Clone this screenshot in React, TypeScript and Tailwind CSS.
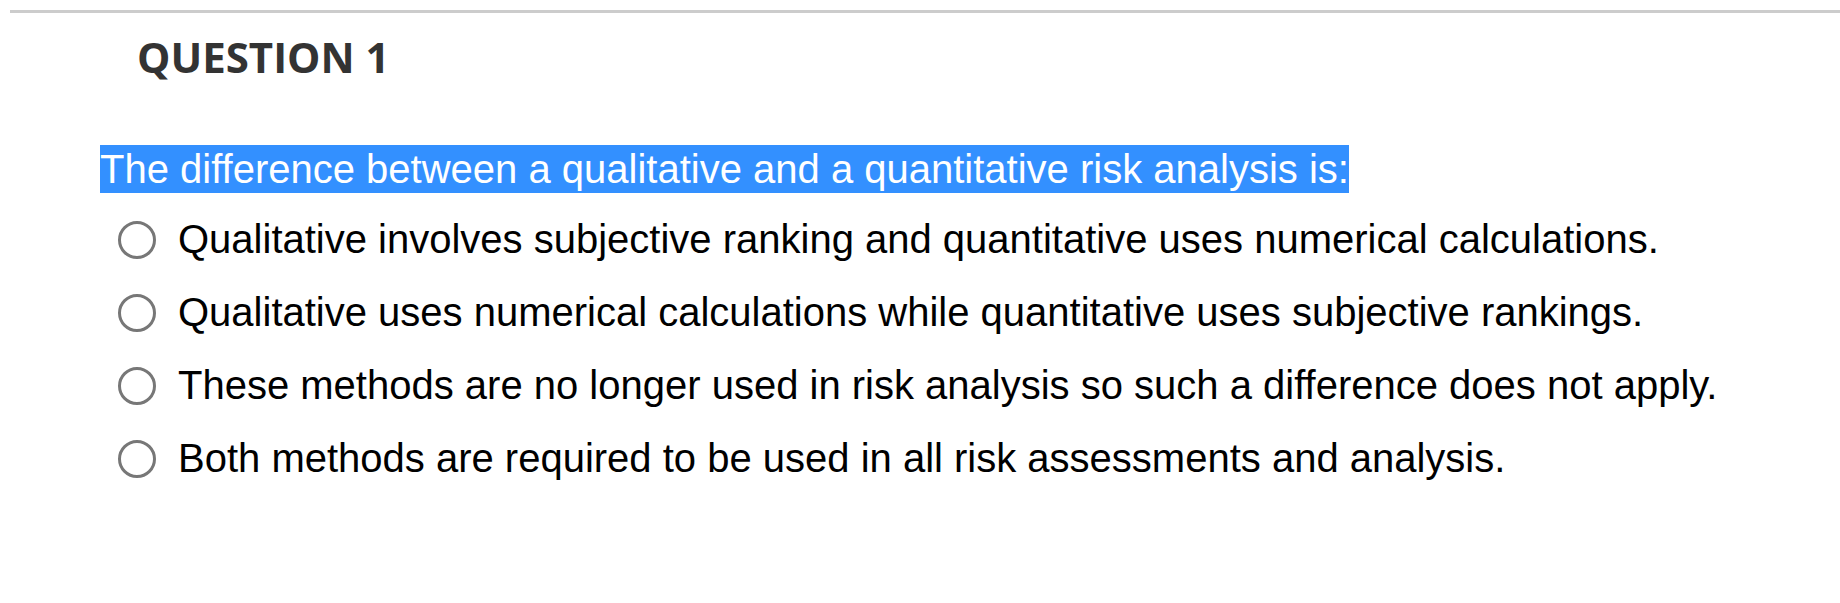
import React from "react";

const options = [
  "Qualitative involves subjective ranking and quantitative uses numerical calculations.",
  "Qualitative uses numerical calculations while quantitative uses subjective rankings.",
  "These methods are no longer used in risk analysis so such a difference does not apply.",
  "Both methods are required to be used in all risk assessments and analysis.",
];

export default function App() {
  return (
    <div className="w-full h-[603px] bg-white pt-[10px] overflow-hidden">
      <div className="ml-[10px] border-t-[3px] border-[#cccccc]" />
      <h2
        className="mt-[22px] ml-[137px] text-[42px] leading-[43px] font-bold text-[#333333]"
        style={{ fontFamily: '"Open Sans", sans-serif' }}
      >
        QUESTION 1
      </h2>
      <div
        className="mt-[67px] ml-[100px]"
        style={{ fontFamily: '"Liberation Sans", Arial, sans-serif' }}
      >
        <div className="text-[40px] leading-[48px]">
          <span className="inline-block bg-[#3390ff] text-white h-[48px]">
            The difference between a qualitative and a quantitative risk analysis is:
          </span>
        </div>
        <div className="mt-[10px] flex flex-col">
          {options.map((o) => (
            <label key={o} className="flex items-center h-[73px] ml-[18px]">
              <span className="w-[38px] h-[38px] rounded-full border-[3px] border-[#777777] shrink-0 bg-white" />
              <span className="ml-[22px] text-[40px] leading-[73px] text-black whitespace-nowrap">
                {o}
              </span>
            </label>
          ))}
        </div>
      </div>
    </div>
  );
}
